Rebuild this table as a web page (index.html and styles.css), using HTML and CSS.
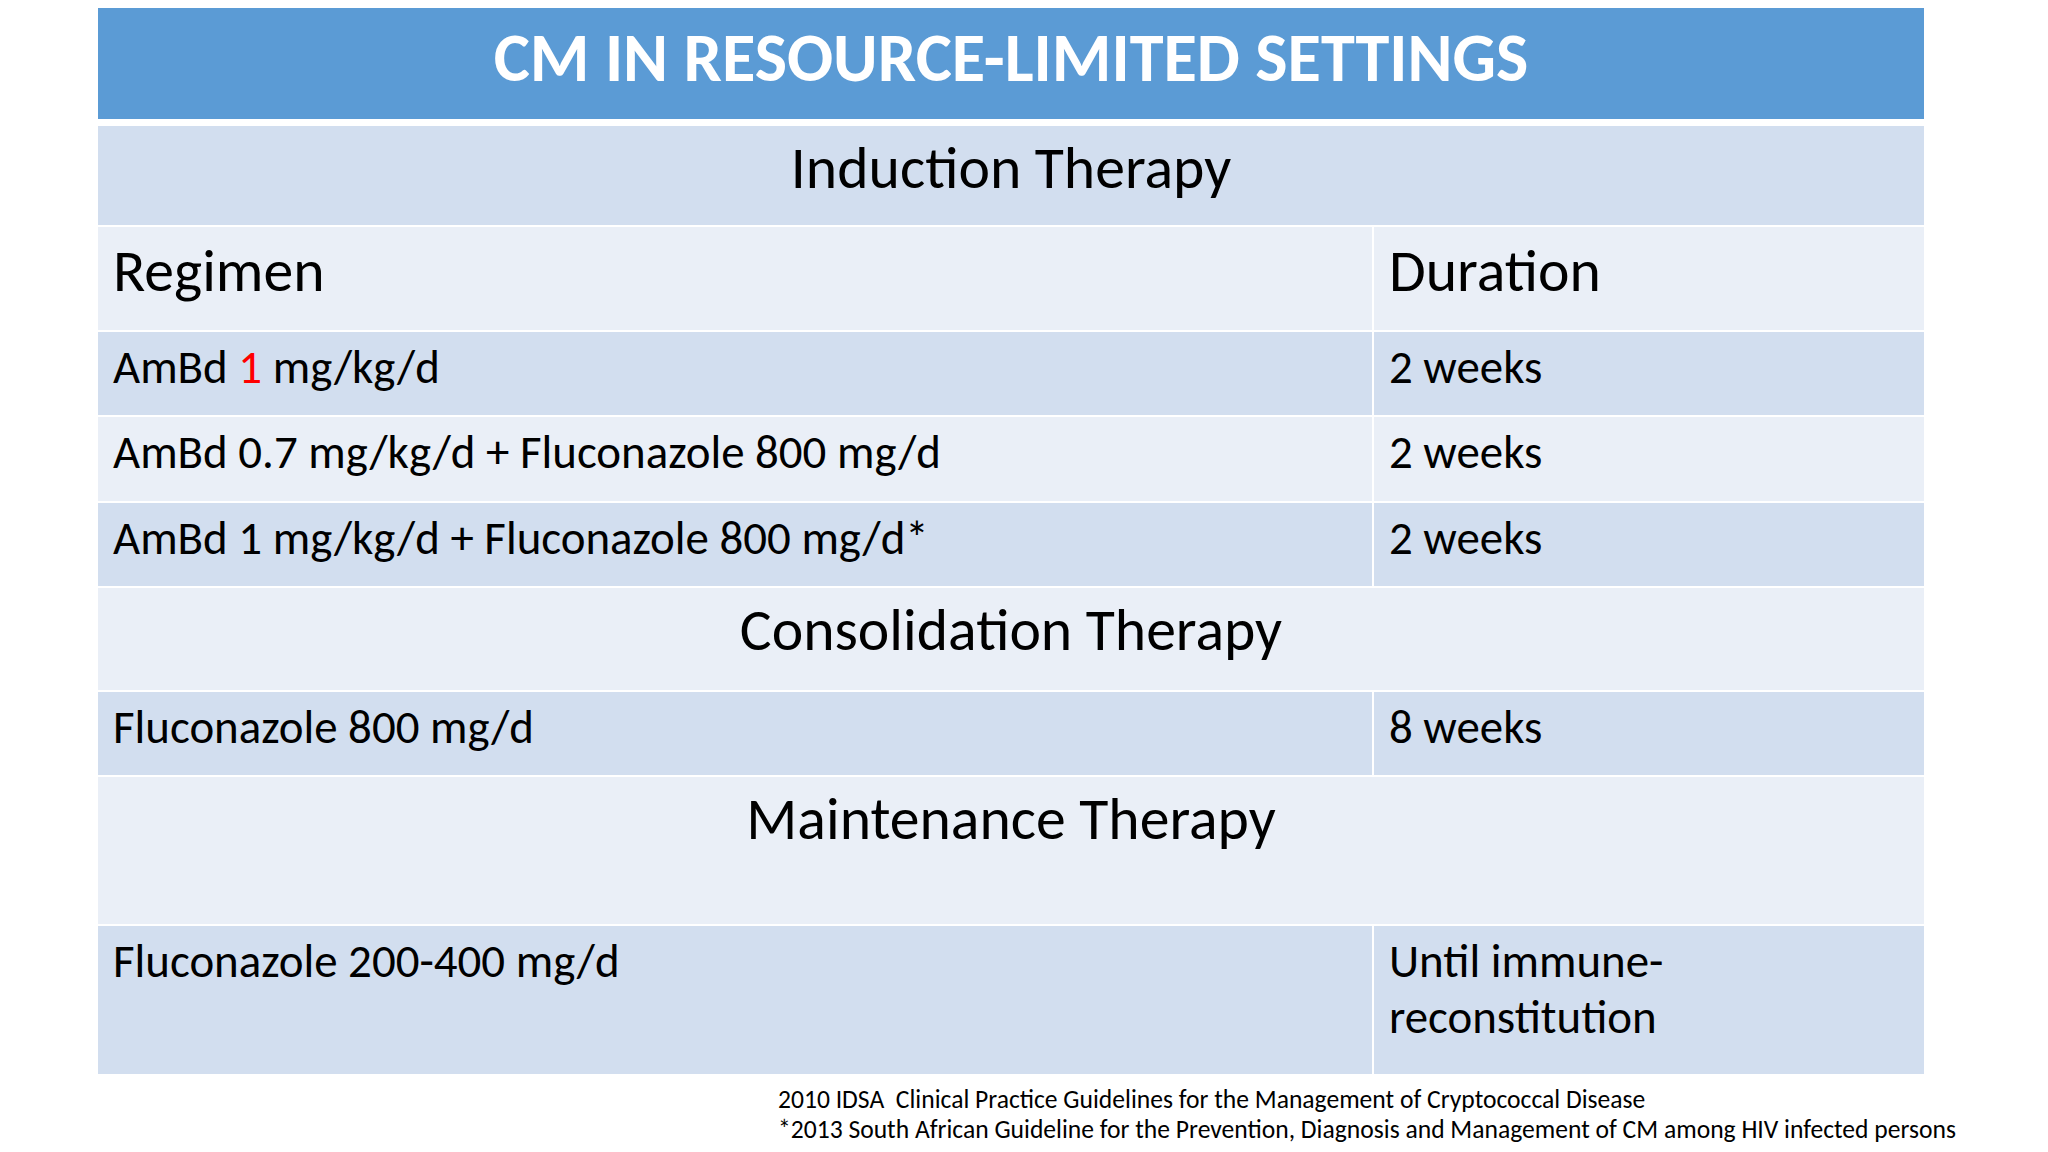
FILE: index.html
```html
<!DOCTYPE html>
<html lang="en">
<head>
<meta charset="utf-8">
<title>CM in Resource-Limited Settings</title>
<link rel="stylesheet" href="styles.css">
</head>
<body>
<div class="slide">
  <div class="title">CM IN RESOURCE-LIMITED SETTINGS</div>
  <div class="table">
    <div class="cell section dark">Induction Therapy</div>
    <div class="cell head light">Regimen</div>
    <div class="cell head light">Duration</div>
    <div class="cell dark">AmBd <span class="red">1</span> mg/kg/d</div>
    <div class="cell dark">2 weeks</div>
    <div class="cell light">AmBd 0.7 mg/kg/d + Fluconazole 800 mg/d</div>
    <div class="cell light">2 weeks</div>
    <div class="cell dark">AmBd 1 mg/kg/d + Fluconazole 800 mg/d*</div>
    <div class="cell dark">2 weeks</div>
    <div class="cell section light">Consolidation Therapy</div>
    <div class="cell dark">Fluconazole 800 mg/d</div>
    <div class="cell dark">8 weeks</div>
    <div class="cell section light">Maintenance Therapy</div>
    <div class="cell dark">Fluconazole 200-400 mg/d</div>
    <div class="cell dark">Until immune-<br>reconstitution</div>
  </div>
  <div class="notes">
    <div class="note">2010 IDSA&nbsp; Clinical Practice Guidelines for the Management of Cryptococcal Disease</div>
    <div class="note">*2013 South African Guideline for the Prevention, Diagnosis and Management of CM among HIV infected persons</div>
  </div>
</div>
</body>
</html>
```
FILE: styles.css
```css
html, body {
  margin: 0;
  padding: 0;
  background: #ffffff;
}

body {
  width: 2048px;
  height: 1152px;
  overflow: hidden;
  font-family: "Carlito", "Lato", "Liberation Sans", sans-serif;
  color: #000000;
}

.slide {
  padding: 8px 0 0 98px;
  width: 1826px;
}

.title {
  height: 111px;
  box-sizing: border-box;
  padding-top: 9px;
  background: #5b9bd5;
  color: #ffffff;
  font-weight: bold;
  font-size: 68.3px;
  line-height: 82px;
  text-align: center;
}

.table {
  margin-top: 7px;
  display: grid;
  grid-template-columns: 1274px 550px;
  grid-template-rows: 99px 103px 83px 84px 83px 102px 83px 147px 148px;
  gap: 2px;
}

.cell {
  box-sizing: border-box;
  padding: 7px 15px 0 15px;
  font-size: 46.9px;
  line-height: 56px;
}

.section {
  grid-column: 1 / span 2;
  text-align: center;
  font-size: 59.7px;
  line-height: 72px;
  padding-top: 6px;
}

.head {
  font-size: 59.7px;
  line-height: 72px;
  padding-top: 8px;
}

.dark {
  background: #d2deef;
}

.light {
  background: #eaeff7;
}

.red {
  color: #ff0000;
}

.notes {
  margin-left: 664px;
  width: 1286px;
  box-sizing: border-box;
  padding: 11px 16px 0 16px;
  background: #ffffff;
  font-size: 25.6px;
  line-height: 30px;
  white-space: nowrap;
}
```
